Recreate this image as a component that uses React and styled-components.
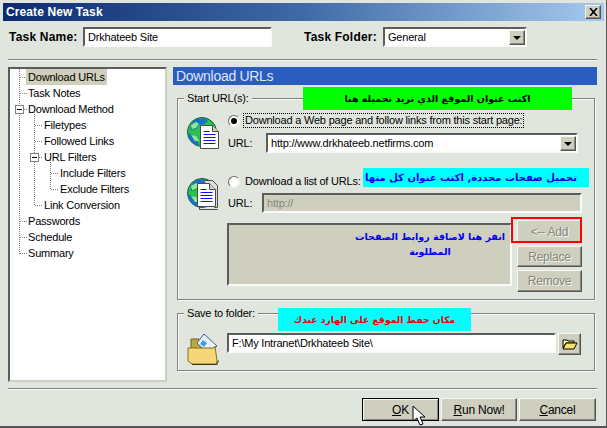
import styled, { createGlobalStyle, css } from "styled-components";

const GlobalStyle = createGlobalStyle`
  html, body {
    margin: 0;
    padding: 0;
    background: #e0e5de;
  }
`;

const sunken = css`
  box-sizing: border-box;
  border: 2px solid;
  border-color: #5c5c5c #fbfcfa #fbfcfa #5c5c5c;
`;

const raised = css`
  box-sizing: border-box;
  background: #cfcfbf;
  border: 1px solid;
  border-color: #f6f7f3 #555 #555 #f6f7f3;
  box-shadow: inset -1px -1px 0 #8a8a80;
`;

const Window = styled.div`
  position: relative;
  box-sizing: border-box;
  width: 607px;
  height: 428px;
  padding: 3px 3px 0;
  overflow: hidden;
  background: #e0e5de;
  border-right: 1px solid #555;
  border-bottom: 2px solid #555;
  font-family: "Liberation Sans", sans-serif;
  font-size: 11px;
  letter-spacing: -0.2px;
  color: #000;
`;

const TitleBar = styled.div`
  display: flex;
  align-items: center;
  justify-content: space-between;
  box-sizing: border-box;
  width: 601px;
  height: 18px;
  padding: 0 3px 0 3px;
  background: linear-gradient(90deg, #0d2a70 0%, #3f6aa6 50%, #a6caef 100%);
  color: #fff;
  font-size: 12px;
  font-weight: bold;
  letter-spacing: 0.1px;
`;

const CloseButton = styled.div`
  ${raised}
  display: flex;
  align-items: center;
  justify-content: center;
  width: 16px;
  height: 14px;
`;

const TaskRow = styled.div`
  display: flex;
  align-items: center;
  height: 20px;
  margin-top: 6px;
  padding-left: 6px;
`;

const FieldLabel = styled.label`
  width: ${({ $width }) => $width}px;
  margin-left: ${({ $offset }) => $offset || 0}px;
  font-size: 12px;
  font-weight: bold;
  letter-spacing: 0.2px;
`;

const TextField = styled.div`
  ${sunken}
  display: flex;
  align-items: center;
  width: ${({ $width }) => $width}px;
  height: 20px;
  padding-left: 3px;
  background: ${({ $disabled }) => ($disabled ? "#cfcfbf" : "#fff")};
  color: ${({ $disabled }) => ($disabled ? "#85857a" : "#000")};
  white-space: nowrap;
`;

const ComboField = styled(TextField)`
  position: relative;
`;

const ArrowButton = styled.div`
  ${raised}
  position: absolute;
  top: 1px;
  right: 0;
  display: flex;
  align-items: center;
  justify-content: center;
  width: 16px;
  height: 15px;
  &::after {
    content: "";
    border-left: 4px solid transparent;
    border-right: 4px solid transparent;
    border-top: 4px solid #000;
  }
`;

const Rule = styled.div`
  height: 1px;
  margin: ${({ $top }) => $top}px 6px 0 5px;
  background: #808080;
  border-bottom: 1px solid #fbfcfa;
`;

const Main = styled.div`
  display: flex;
  gap: 6px;
  height: 315px;
  margin: 6px 6px 0 5px;
`;

const Tree = styled.div`
  position: relative;
  box-sizing: border-box;
  flex: 0 0 159px;
  background: #fff;
  border: 2px solid;
  border-color: #5c5c5c #cfcfbf #cfcfbf #5c5c5c;
`;

const TreeLines = styled.svg`
  position: absolute;
  top: 0;
  left: 0;
`;

const TreeRow = styled.div`
  height: 16px;
  padding-left: ${({ $level }) => 16 + $level * 16}px;
`;

const TreeText = styled.span`
  position: relative;
  display: inline-block;
  height: 16px;
  padding: 0 2px;
  line-height: 16px;
  background: ${({ $selected }) => ($selected ? "#cfcfbb" : "transparent")};
`;

const Panel = styled.div`
  flex: 1;
  min-width: 0;
`;

const PanelHeader = styled.div`
  height: 18px;
  padding-left: 3px;
  background: #2b5dc0;
  color: #dce8f8;
  font-size: 14px;
  letter-spacing: -0.3px;
  line-height: 18px;
`;

const Group = styled.div`
  position: relative;
  box-sizing: border-box;
  height: ${({ $height }) => $height}px;
  margin: 13px 2px 0 4px;
  padding: ${({ $padTop }) => $padTop}px 0 0 9px;
  border: 1px solid #808080;
  box-shadow: inset 1px 1px 0 #fbfcfa, 1px 1px 0 #fbfcfa;
`;

const Legend = styled.div`
  position: absolute;
  top: -9px;
  left: 6px;
  padding: 0 3px;
  background: #e0e5de;
  line-height: 16px;
`;

const Note = styled.div`
  position: absolute;
  top: ${({ $top }) => $top}px;
  left: ${({ $left }) => $left}px;
  z-index: 2;
  display: flex;
  align-items: center;
  justify-content: center;
  box-sizing: border-box;
  width: ${({ $width }) => $width}px;
  height: ${({ $height }) => $height}px;
  padding-right: ${({ $shift }) => $shift || 0}px;
  background: ${({ $bg }) => $bg};
  color: ${({ $color }) => $color};
  font-family: "DejaVu Sans", sans-serif;
  font-size: ${({ $size }) => $size}px;
  font-weight: bold;
  letter-spacing: 0;
  white-space: nowrap;
`;

const Source = styled.div`
  display: flex;
  gap: 8px;
  margin-top: ${({ $top }) => $top || 0}px;
`;

const IconSlot = styled.div`
  flex: 0 0 33px;
  padding-top: 4px;
`;

const SourceBody = styled.div`
  flex: 1;
`;

const RadioLine = styled.div`
  display: flex;
  align-items: center;
  height: 15px;
`;

const RadioDot = styled.span`
  box-sizing: border-box;
  display: flex;
  align-items: center;
  justify-content: center;
  width: 12px;
  height: 12px;
  margin-right: 3px;
  background: #fff;
  border: 1px solid;
  border-color: #666 #eee #eee #666;
  border-radius: 50%;
  &::after {
    content: "";
    display: ${({ $on }) => ($on ? "block" : "none")};
    width: 6px;
    height: 6px;
    background: #000;
    border-radius: 50%;
  }
`;

const RadioText = styled.span`
  padding: 0 1px;
  line-height: 13px;
  border: 1px ${({ $focus }) => ($focus ? "dotted #000" : "solid transparent")};
  white-space: nowrap;
`;

const UrlRow = styled.div`
  display: flex;
  align-items: center;
  margin-top: ${({ $top }) => $top}px;
`;

const UrlLabel = styled.span`
  width: ${({ $width }) => $width}px;
`;

const LowerRow = styled.div`
  display: flex;
  gap: 5px;
  margin: 7px 0 0 40px;
`;

const ListBox = styled.div`
  ${sunken}
  display: flex;
  justify-content: flex-end;
  width: 285px;
  height: 63px;
  margin-top: 3px;
  background: #cfcfbf;
`;

const ListNote = styled.div`
  width: 160px;
  padding-top: 4px;
  color: #0000f0;
  font-family: "DejaVu Sans", sans-serif;
  font-size: 9.5px;
  font-weight: bold;
  letter-spacing: 0;
  line-height: 15px;
  text-align: center;
  white-space: nowrap;
`;

const ButtonStack = styled.div`
  position: relative;
  display: flex;
  flex-direction: column;
  gap: 3px;
  width: 65px;
`;

const RedFrame = styled.div`
  position: absolute;
  top: -3px;
  left: -6px;
  box-sizing: border-box;
  width: 71px;
  height: 26px;
  border: 2px solid #f00;
`;

const SideButton = styled.div`
  ${raised}
  display: flex;
  align-items: center;
  justify-content: center;
  height: ${({ $height }) => $height}px;
  color: #85857a;
  font-size: 12px;
  text-shadow: 1px 1px 0 #f6f7f3;
`;

const SaveRow = styled.div`
  display: flex;
  align-items: flex-start;
  gap: 2px;
`;

const FolderSlot = styled.div`
  flex: 0 0 38px;
  padding-top: 1px;
`;

const BrowseButton = styled(SideButton)`
  width: 23px;
`;

const Footer = styled.div`
  display: flex;
  justify-content: flex-end;
  gap: 2px;
  margin: 8px 7px 0 0;
`;

const DialogButton = styled.div`
  ${raised}
  display: flex;
  align-items: center;
  justify-content: center;
  width: ${({ $width }) => $width}px;
  height: 23px;
  font-size: 12px;
  ${({ $primary }) =>
    $primary &&
    css`
      border: 1px solid #000;
      box-shadow: inset 1px 1px 0 #f6f7f3, inset -1px -1px 0 #8a8a80;
    `}
  u {
    text-underline-offset: 1px;
  }
`;

const Cursor = styled.svg`
  position: absolute;
  top: 405px;
  left: 412px;
  z-index: 3;
`;

const treeItems = [
  { label: "Download URLs", level: 0, selected: true },
  { label: "Task Notes", level: 0 },
  { label: "Download Method", level: 0 },
  { label: "Filetypes", level: 1 },
  { label: "Followed Links", level: 1 },
  { label: "URL Filters", level: 1 },
  { label: "Include Filters", level: 2 },
  { label: "Exclude Filters", level: 2 },
  { label: "Link Conversion", level: 1 },
  { label: "Passwords", level: 0 },
  { label: "Schedule", level: 0 },
  { label: "Summary", level: 0 },
];

// tree box starts at x=8 y=67 in the dialog, inner area at +2
const rowY = (i) => 8 + i * 16 + 0.5;

function TreeConnectors() {
  const dots = { stroke: "#808080", strokeDasharray: "1 1", fill: "none" };
  const stubs = treeItems.map((item, i) => {
    const x = 9.5 + item.level * 16 - (item.level ? 1 : 0);
    return <path key={item.label} d={`M${x} ${rowY(i)}H${x + 7}`} {...dots} />;
  });
  return (
    <TreeLines width="155" height="280" shapeRendering="crispEdges">
      <path d={`M9.5 0V${rowY(11)}`} {...dots} />
      <path d={`M24.5 ${rowY(2)}V${rowY(8)}`} {...dots} />
      <path d={`M40.5 ${rowY(5)}V${rowY(7)}`} {...dots} />
      {stubs}
      <rect x="5.5" y={rowY(2) - 4} width="8" height="8" fill="#fff" stroke="#808080" />
      <path d={`M7 ${rowY(2)}H12`} stroke="#000" />
      <rect x="20.5" y={rowY(5) - 4} width="8" height="8" fill="#fff" stroke="#808080" />
      <path d={`M22 ${rowY(5)}H27`} stroke="#000" />
    </TreeLines>
  );
}

function Globe() {
  return (
    <>
      <circle cx="15" cy="15" r="14.5" fill="#2cc24a" stroke="#0b5a3a" />
      <path d="M8 3c4-2 9-2 13 0l-3 4-6 1-3 4-5 1c-1-4 1-8 4-10z" fill="#1a70c8" />
      <path d="M1 16l6 3 4 6 1 4C6 28 2 23 1 16z" fill="#1a70c8" />
      <path d="M4 8l5-3 3 2-3 4-4 1z" fill="#8fe89a" />
      <path d="M4 18l5 1 3 5-4 0z" fill="#8fe89a" />
    </>
  );
}

function Page({ x, y }) {
  return (
    <g>
      <path d={`M${x} ${y}h12l6 6v17h-18z`} fill="#fff" stroke="#4a4a4a" />
      <path d={`M${x + 12} ${y}v6h6`} fill="#cfcfcf" stroke="#4a4a4a" />
      <path
        d={`M${x + 3} ${y + 6}h6M${x + 3} ${y + 9}h12M${x + 3} ${y + 12}h12M${x + 3} ${y + 15}h12M${x + 3} ${y + 18}h12`}
        stroke="#1010e0"
      />
    </g>
  );
}

function WebPageIcon() {
  return (
    <svg width="33" height="33" viewBox="0 0 33 33">
      <Globe />
      <Page x={13.5} y={8.5} />
    </svg>
  );
}

function PageListIcon() {
  return (
    <svg width="33" height="33" viewBox="0 0 33 33">
      <Globe />
      <path d="M17.5 2.500h8l5 5v22h-3" fill="#ddd" stroke="#4a4a4a" />
      <path d="M30.500 31.500h-18v-3" fill="none" stroke="#4a4a4a" />
      <Page x={10.5} y={5.5} />
    </svg>
  );
}

function FolderIcon() {
  return (
    <svg width="33" height="31" viewBox="0 0 33 31">
      <path d="M4 5h8l2 2v14H4z" fill="#b9a83a" stroke="#6b6320" />
      <path d="M17 0l13 12-9 8-11-11z" fill="#e8f0ff" stroke="#4a5a90" />
      <path d="M16 6l4 3-3 4-4-3z" fill="#38a0e8" />
      <path d="M1 14h26l1-2 2 15-1 3H5L1 27z" fill="#f7d67a" stroke="#7a7220" />
      <path d="M5 30.500h25l1.500-4" fill="none" stroke="#3b3a10" />
    </svg>
  );
}

function OpenFolderGlyph() {
  return (
    <svg width="16" height="12" viewBox="0 0 16 12">
      <path d="M1 2h4l1 1h6v2H4L1 10z" fill="#fff799" stroke="#000" />
      <path d="M4 5h11l-3 6H1z" fill="#f3e36a" stroke="#000" />
    </svg>
  );
}

export default function App() {
  return (
    <>
      <GlobalStyle />
      <Window>
        <TitleBar>
          <span>Create New Task</span>
          <CloseButton>
            <svg width="9" height="8" viewBox="0 0 9 8">
              <path d="M1 0l7 8M8 0L1 8" stroke="#000" strokeWidth="1.600" />
            </svg>
          </CloseButton>
        </TitleBar>

        <TaskRow>
          <FieldLabel $width={74}>Task Name:</FieldLabel>
          <TextField $width={189}>Drkhateeb Site</TextField>
          <FieldLabel $width={79} $offset={32}>
            Task Folder:
          </FieldLabel>
          <ComboField $width={144}>
            General
            <ArrowButton />
          </ComboField>
        </TaskRow>

        <Rule $top={12} />

        <Main>
          <Tree>
            <TreeConnectors />
            {treeItems.map((item) => (
              <TreeRow key={item.label} $level={item.level}>
                <TreeText $selected={item.selected}>{item.label}</TreeText>
              </TreeRow>
            ))}
          </Tree>

          <Panel>
            <PanelHeader>Download URLs</PanelHeader>

            <Group $height={202} $padTop={14}>
              <Legend>Start URL(s):</Legend>
              <Note $top={-12} $left={125} $width={269} $height={23} $size={9.5} $bg="#00ff00" $color="#000">
                اكتب عنوان الموقع الذي تريد تحميله هنا
              </Note>
              <Note $top={69} $left={185} $width={226} $height={19} $size={10} $shift={10} $bg="#00ffff" $color="#0000f0">
                تحميل صفحات محددة, اكتب عنوان كل منها
              </Note>

              <Source>
                <IconSlot>
                  <WebPageIcon />
                </IconSlot>
                <SourceBody>
                  <RadioLine>
                    <RadioDot $on />
                    <RadioText $focus>Download a Web page and follow links from this start page:</RadioText>
                  </RadioLine>
                  <UrlRow $top={5}>
                    <UrlLabel $width={38}>URL:</UrlLabel>
                    <ComboField $width={312}>
                      http://www.drkhateeb.netfirms.com
                      <ArrowButton />
                    </ComboField>
                  </UrlRow>
                </SourceBody>
              </Source>

              <Source $top={21}>
                <IconSlot>
                  <PageListIcon />
                </IconSlot>
                <SourceBody>
                  <RadioLine>
                    <RadioDot />
                    <RadioText>Download a list of URLs:</RadioText>
                  </RadioLine>
                  <UrlRow $top={4}>
                    <UrlLabel $width={34}>URL:</UrlLabel>
                    <TextField $width={320} $disabled>
                      http://
                    </TextField>
                  </UrlRow>
                </SourceBody>
              </Source>

              <LowerRow>
                <ListBox>
                  <ListNote>
                    انفر هنا لاضافة روابط الصفحات
                    <br />
                    المطلوبة
                  </ListNote>
                </ListBox>
                <ButtonStack>
                  <SideButton $height={23}>&lt;-- Add</SideButton>
                  <SideButton $height={21}>Replace</SideButton>
                  <SideButton $height={22}>Remove</SideButton>
                  <RedFrame />
                </ButtonStack>
              </LowerRow>
            </Group>

            <Group $height={58} $padTop={19}>
              <Legend>Save to folder:</Legend>
              <Note $top={-6} $left={100} $width={193} $height={23} $size={9.2} $bg="#00ffff" $color="#f00000">
                مكان حفظ الموقع على الهارد عندك
              </Note>
              <SaveRow>
                <FolderSlot>
                  <FolderIcon />
                </FolderSlot>
                <TextField $width={329}>F:\My Intranet\Drkhateeb Site\</TextField>
                <BrowseButton $height={22}>
                  <OpenFolderGlyph />
                </BrowseButton>
              </SaveRow>
            </Group>
          </Panel>
        </Main>

        <Rule $top={6} />

        <Footer>
          <DialogButton $width={77} $primary>
            <span>
              <u>O</u>K
            </span>
          </DialogButton>
          <DialogButton $width={76}>
            <span>
              <u>R</u>un Now!
            </span>
          </DialogButton>
          <DialogButton $width={77}>
            <span>
              <u>C</u>ancel
            </span>
          </DialogButton>
        </Footer>

        <Cursor width="14" height="22" viewBox="0 0 14 22">
          <path d="M1 1v15l4-3 3 7 3-1-3-7h5z" fill="#fff" stroke="#000" />
        </Cursor>
      </Window>
    </>
  );
}
